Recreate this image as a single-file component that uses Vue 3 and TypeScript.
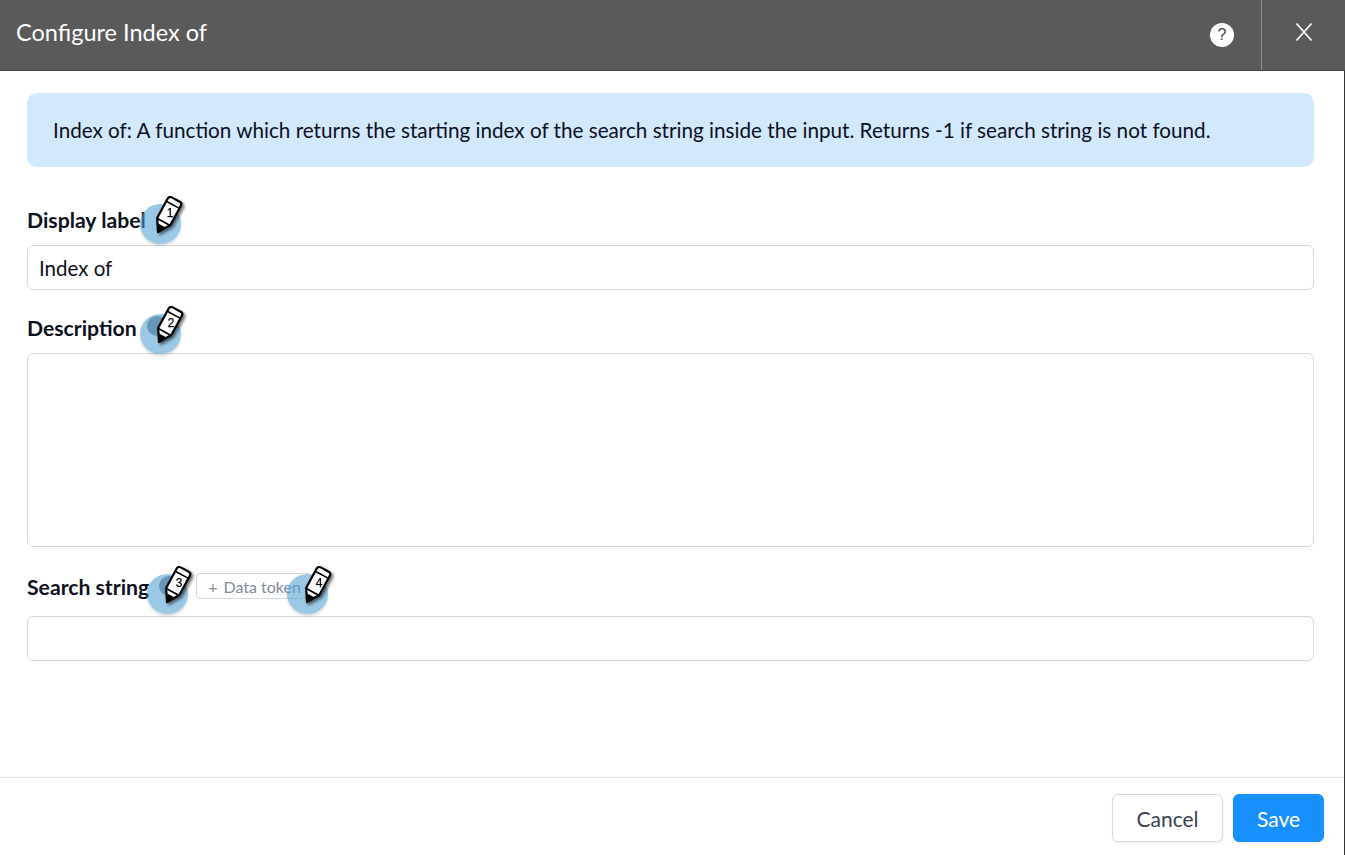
<script setup lang="ts">
const pencilHref = '#pencil-mark'
</script>

<template>
  <div class="dialog">
    <svg class="defs" width="0" height="0" aria-hidden="true">
      <symbol id="pencil-mark" viewBox="-4 -4 40 50" overflow="visible">
        <g transform="rotate(28.6 6 36)">
          <path d="M6 36 -1.5 24V2a3 3 0 0 1 3-3h9a3 3 0 0 1 3 3v22Z" fill="#fff" stroke="#000" stroke-width="2.2" stroke-linejoin="round" />
          <path d="M6 36 2 28.4h8Z" fill="#000" />
          <path d="M-1 24.5h14" stroke="#000" stroke-width="1.8" />
          <path d="M-1 5h14" stroke="#000" stroke-width="1.6" />
        </g>
      </symbol>
    </svg>

    <header class="header">
      <h1 class="title">Configure Index of</h1>
      <div class="header-actions">
        <span class="help">?</span>
        <button class="close" aria-label="Close">
          <svg width="18" height="20" viewBox="0 0 18 20"><path d="M1.5 1.5 16.5 18.5M16.5 1.5 1.5 18.5" stroke="#fff" stroke-width="1.7" fill="none" /></svg>
        </button>
      </div>
    </header>

    <main class="body">
      <div class="alert">Index of: A function which returns the starting index of the search string inside the input. Returns -1 if search string is not found.</div>

      <div class="label-row first">
        <label class="label">Display label</label>
        <span class="marker m1">
          <span class="spot"></span>
          <svg class="pencil" width="40" height="50" viewBox="-4 -4 40 50">
            <use :href="pencilHref" x="-4" y="-4" width="40" height="50" />
            <text x="18" y="21" class="num">1</text>
          </svg>
        </span>
      </div>
      <input class="field" value="Index of" />

      <div class="label-row second">
        <label class="label">Description</label>
        <span class="marker m2">
          <span class="spot"></span>
          <span class="dot"></span>
          <svg class="pencil" width="40" height="50" viewBox="-4 -4 40 50">
            <use :href="pencilHref" x="-4" y="-4" width="40" height="50" />
            <text x="18" y="21" class="num">2</text>
          </svg>
        </span>
      </div>
      <textarea class="area"></textarea>

      <div class="label-row third">
        <label class="label">Search string</label>
        <span class="marker m3">
          <span class="spot"></span>
          <span class="dot"></span>
          <svg class="pencil" width="40" height="50" viewBox="-4 -4 40 50">
            <use :href="pencilHref" x="-4" y="-4" width="40" height="50" />
            <text x="18" y="21" class="num">3</text>
          </svg>
        </span>
        <button class="token"><span class="plus">+</span>Data token</button>
        <span class="marker m4">
          <span class="spot"></span>
          <svg class="pencil" width="40" height="50" viewBox="-4 -4 40 50">
            <use :href="pencilHref" x="-4" y="-4" width="40" height="50" />
            <text x="18" y="21" class="num">4</text>
          </svg>
        </span>
      </div>
      <input class="field" />
    </main>

    <footer class="footer">
      <button class="btn cancel">Cancel</button>
      <button class="btn save">Save</button>
    </footer>
    <span class="edge"></span>
  </div>
</template>

<style>
html, body { margin: 0; background: #fff; overflow: hidden; }
</style>

<style scoped>
.defs { position: absolute; }
.dialog {
  position: relative;
  width: 1345px;
  height: 855px;
  display: flex;
  flex-direction: column;
  font-family: Lato, "Liberation Sans", sans-serif;
  color: #0c1021;
  background: #fff;
}
.edge {
  position: absolute;
  right: 0;
  top: 71px;
  bottom: 0;
  width: 1px;
  background: #333;
}
.header {
  height: 71px;
  box-sizing: border-box;
  flex: none;
  display: flex;
  align-items: stretch;
  justify-content: space-between;
  background: #5a5a5a;
  border-bottom: 1px solid #444;
  padding-left: 16px;
}
.title {
  margin: 0;
  align-self: center;
  font-size: 23.5px;
  font-weight: 400;
  color: #fff;
  position: relative;
  top: -3px;
}
.header-actions { display: flex; align-items: center; }
.help {
  width: 24px;
  height: 24px;
  border-radius: 50%;
  background: #fff;
  color: #444;
  font: 400 16px/23px "Liberation Sans", sans-serif;
  text-align: center;
  margin-right: 27px;
}
.close {
  width: 84px;
  height: 70px;
  background: none;
  border: 0;
  border-left: 1px solid #8e8e8e;
  padding: 0 0 6px 0;
  display: flex;
  align-items: center;
  justify-content: center;
}
.body { flex: 1; padding: 22px 31px 0 27px; }
.alert {
  height: 74px;
  box-sizing: border-box;
  background: #d2e8fe;
  border-radius: 10px;
  padding: 0 26px;
  font-size: 20.68px;
  line-height: 74px;
  white-space: nowrap;
}
.label-row { display: flex; align-items: center; height: 30px; position: relative; }
.label-row.first { margin-top: 39px; margin-bottom: 9px; }
.label-row.second { margin-top: 24px; margin-bottom: 9px; }
.label-row.third { margin-top: 25px; margin-bottom: 14px; }
.label { font-size: 21.2px; font-weight: 700; padding-bottom: 3px; }
.third .label { padding-bottom: 1px; }
.field, .area {
  display: block;
  width: 100%;
  box-sizing: border-box;
  border: 1px solid #d9d9d9;
  border-radius: 6px;
  font: 20.5px Lato, sans-serif;
  color: #0c1021;
  padding: 0 11px;
  outline: none;
  background: #fff;
}
.field { height: 45px; }
.area { height: 194px; resize: none; }
.token {
  margin-left: 47px;
  margin-bottom: 2px;
  height: 26px;
  width: 116px;
  box-sizing: border-box;
  border: 1px solid #d9d9d9;
  border-radius: 4px;
  background: #fff;
  color: #7f8c9a;
  font: 16px Lato, sans-serif;
  padding: 0 0 0 11px;
  text-align: left;
  white-space: nowrap;
}
.plus { margin-right: 6px; color: #7f8c9a; }
.marker {
  position: absolute;
  width: 60px;
  height: 60px;
}
.m1 { left: 112px; top: -17px; }
.m2 { left: 112px; top: -15px; }
.m3 { left: 119px; top: -13px; }
.m4 { left: 259px; top: -13px; }
.spot {
  position: absolute;
  left: 1px;
  top: 15px;
  width: 41px;
  height: 40px;
  border-radius: 50%;
  background: rgba(82, 160, 210, 0.58);
  box-shadow: 0 2px 3px rgba(0, 0, 0, 0.15);
}
.dot {
  position: absolute;
  left: 8px;
  top: 17px;
  width: 20px;
  height: 20px;
  border-radius: 50%;
  background: rgba(50, 100, 140, 0.5);
}
.m3 .dot { left: 13px; }
.pencil {
  position: absolute;
  left: 10px;
  top: 3px;
  overflow: visible;
  filter: drop-shadow(2px 2px 1.5px rgba(0, 0, 0, 0.55));
}
.m1 .pencil { left: 9px; }
.m3 .pencil, .m4 .pencil { left: 11px; }
.num { font: 400 12px "Liberation Sans", sans-serif; fill: #000; stroke: #000; stroke-width: 0.25; text-anchor: middle; }
.footer {
  flex: none;
  height: 78px;
  box-sizing: border-box;
  border-top: 1px solid #e5e5e5;
  display: flex;
  justify-content: flex-end;
  align-items: flex-start;
  gap: 10px;
  padding: 16px 21px 0 0;
}
.btn {
  height: 48px;
  border-radius: 6px;
  font: 21px Lato, sans-serif;
  box-shadow: 0 2px 2px rgba(0, 0, 0, 0.04);
}
.cancel { width: 111px; background: #fff; border: 1px solid #d9d9d9; color: #3b3f52; }
.save { width: 91px; background: #1890ff; border: 1px solid #1890ff; color: #fff; }
</style>
